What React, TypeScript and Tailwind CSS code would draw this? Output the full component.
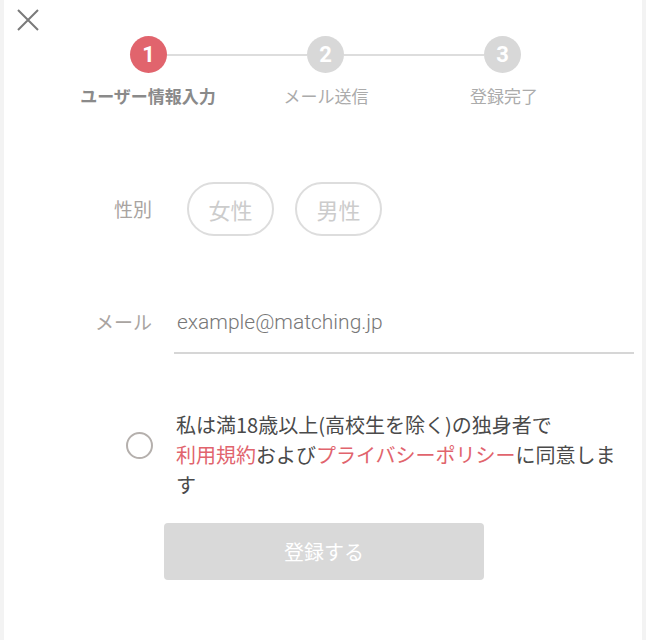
import { useState } from "react";

const jp = "font-['Noto_Sans_CJK_JP',sans-serif]";

const steps = ["ユーザー情報入力", "メール送信", "登録完了"];

function CloseIcon() {
  return (
    <svg width="24" height="24" viewBox="0 0 24 24" fill="none" stroke="#7a7a7a" strokeWidth="2">
      <path d="M2 2 L22 22 M22 2 L2 22" />
    </svg>
  );
}

function StepDot({ n, active }: { n: number; active?: boolean }) {
  return (
    <div
      className={`flex h-[37px] w-[37px] shrink-0 items-center justify-center rounded-full text-[22px] font-bold text-white font-['Roboto',sans-serif] ${
        active ? "bg-[#e1646d]" : "bg-[#d8d8d8]"
      }`}
    >
      {n}
    </div>
  );
}

export default function App() {
  const [gender, setGender] = useState<string | null>(null);
  const [agreed, setAgreed] = useState(false);
  const [email, setEmail] = useState("");

  return (
    <div className={`flex min-h-screen justify-center bg-[#f3f3f3] ${jp}`}>
      <div className="min-h-[640px] w-[638px] bg-white">
        <button type="button" className="ml-[12px] mt-[8px] block h-[24px] w-[24px]">
          <CloseIcon />
        </button>

        {/* progress */}
        <div className="mt-[4px] flex items-center pl-[126px] pr-[121px]">
          <StepDot n={1} active />
          <div className="h-[2px] flex-1 bg-[#dddddd]" />
          <StepDot n={2} />
          <div className="h-[2px] flex-1 bg-[#dddddd]" />
          <StepDot n={3} />
        </div>
        <div className="mt-[11px] grid grid-cols-[178px_178px_178px] pl-[55px]">
          {steps.map((s, i) => (
            <p
              key={s}
              className={`text-center text-[17px] leading-[24px] ${
                i === 0 ? "font-bold text-[#8a8a8a]" : "text-[#ababab]"
              }`}
            >
              {s}
            </p>
          ))}
        </div>

        {/* gender */}
        <div className="mt-[74px] flex items-center">
          <span className="w-[148px] text-right text-[19px] text-[#a9a4a1]">性別</span>
          <div className="ml-[35px] flex gap-[21px]">
            {["女性", "男性"].map((g) => (
              <button
                key={g}
                type="button"
                onClick={() => setGender(g)}
                className={`h-[54px] w-[87px] rounded-full border-2 text-[22px] ${
                  gender === g ? "border-[#e1646d] text-[#e1646d]" : "border-[#dddddd] text-[#cccccc]"
                }`}
              >
                {g}
              </button>
            ))}
          </div>
        </div>

        {/* email */}
        <div className="mt-[72px] flex items-start pr-[8px]">
          <span className="w-[148px] text-right text-[19px] leading-[28px] text-[#a9a4a1]">メール</span>
          <div className="ml-[22px] flex-1 border-b-2 border-[#d6d6d6] pb-[16px] pl-[3px]">
            <input
              value={email}
              onChange={(e) => setEmail(e.target.value)}
              placeholder="example@matching.jp"
              className="block w-full bg-transparent text-[21px] font-light leading-[28px] text-[#777] outline-none placeholder:text-[#777777] font-['Roboto',sans-serif]"
            />
          </div>
        </div>

        {/* agreement */}
        <div className="mt-[56px] flex items-start gap-[23px] pl-[122px] pr-[8px]">
          <button
            type="button"
            onClick={() => setAgreed(!agreed)}
            className={`mt-[22px] h-[27px] w-[27px] shrink-0 rounded-full border-2 ${
              agreed ? "border-[#e1646d] bg-[#e1646d]" : "border-[#b5b0ad]"
            }`}
          />
          <p className="text-[20px] leading-[30px] text-[#4a4a4a]">
            私は満18歳以上(高校生を除く)の独身者で
            <br />
            <span className="text-[#e1646d]">利用規約</span>および
            <span className="text-[#e1646d]">プライバシーポリシー</span>に同意します
          </p>
        </div>

        <button
          type="button"
          disabled={!agreed}
          className="ml-[160px] mt-[23px] h-[57px] w-[320px] rounded-[4px] bg-[#d9d9d9] text-[20px] text-white"
        >
          登録する
        </button>
      </div>
    </div>
  );
}
